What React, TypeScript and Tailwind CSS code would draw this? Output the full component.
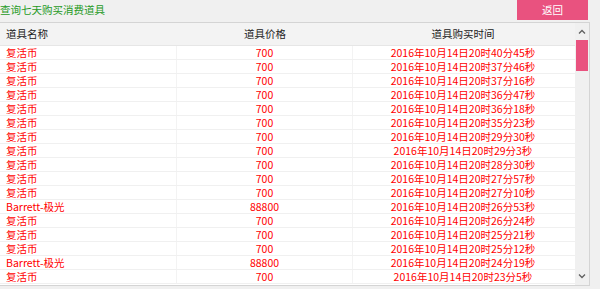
import React from 'react';

const rows = [
  { name: '复活币', price: '700', time: '2016年10月14日20时40分45秒' },
  { name: '复活币', price: '700', time: '2016年10月14日20时37分46秒' },
  { name: '复活币', price: '700', time: '2016年10月14日20时37分16秒' },
  { name: '复活币', price: '700', time: '2016年10月14日20时36分47秒' },
  { name: '复活币', price: '700', time: '2016年10月14日20时36分18秒' },
  { name: '复活币', price: '700', time: '2016年10月14日20时35分23秒' },
  { name: '复活币', price: '700', time: '2016年10月14日20时29分30秒' },
  { name: '复活币', price: '700', time: '2016年10月14日20时29分3秒' },
  { name: '复活币', price: '700', time: '2016年10月14日20时28分30秒' },
  { name: '复活币', price: '700', time: '2016年10月14日20时27分57秒' },
  { name: '复活币', price: '700', time: '2016年10月14日20时27分10秒' },
  { name: 'Barrett-极光', price: '88800', time: '2016年10月14日20时26分53秒' },
  { name: '复活币', price: '700', time: '2016年10月14日20时26分24秒' },
  { name: '复活币', price: '700', time: '2016年10月14日20时25分21秒' },
  { name: '复活币', price: '700', time: '2016年10月14日20时25分12秒' },
  { name: 'Barrett-极光', price: '88800', time: '2016年10月14日20时24分19秒' },
  { name: '复活币', price: '700', time: '2016年10月14日20时23分5秒' },
];

export default function App() {
  return (
    <div className="w-[600px] h-[289px] bg-[#f0f0f0] overflow-hidden flex flex-col" style={{ fontFamily: '"Noto Sans CJK SC", "Liberation Sans", sans-serif' }}>
      {/* top bar */}
      <div className="h-[22px] flex items-start justify-between shrink-0">
        <span className="text-[10.5px] leading-[18px] text-[#1f9a1f] pt-[1px]">查询七天购买消费道具</span>
        <button className="w-[71px] h-[20px] mr-[12px] bg-[#e9527f] text-white text-[10.5px] leading-[20px]">返回</button>
      </div>

      {/* list panel */}
      <div className="w-[590px] h-[264px] border-t border-r border-b border-[#d4d4d4] bg-white flex">
        <div className="w-[575px] flex flex-col">
          <div className="h-[23px] flex bg-[#f3f3f3] border-b border-[#e6e6e6] text-[10.5px] text-[#222] items-center">
            <div className="w-[177px] pl-[6px]">道具名称</div>
            <div className="w-[176px] text-center">道具价格</div>
            <div className="w-[220px] text-center">道具购买时间</div>
          </div>
          {rows.map((r, i) => (
            <div key={i} className="h-[14px] flex border-b border-[#f0f0f0] text-[10.5px] leading-[13px] text-[#ff0000]">
              <div className="w-[177px] pl-[6px] border-r border-[#f3f3f3]">{r.name}</div>
              <div className="w-[176px] text-center border-r border-[#f3f3f3]">{r.price}</div>
              <div className="w-[220px] text-center">{r.time}</div>
            </div>
          ))}
        </div>

        {/* scrollbar */}
        <div className="w-[14px] bg-[#f0f0f0] flex flex-col items-center">
          <div className="h-[17px] flex items-center justify-center">
            <svg width="8" height="5" viewBox="0 0 8 5"><path d="M1 4.5 L4 1.5 L7 4.5" stroke="#606060" strokeWidth="1.3" fill="none" /></svg>
          </div>
          <div className="w-[12px] h-[31px] bg-[#e9527f]" />
          <div className="flex-1" />
          <div className="h-[17px] flex items-center justify-center">
            <svg width="8" height="5" viewBox="0 0 8 5"><path d="M1 0.5 L4 3.5 L7 0.5" stroke="#606060" strokeWidth="1.3" fill="none" /></svg>
          </div>
        </div>
      </div>
    </div>
  );
}
